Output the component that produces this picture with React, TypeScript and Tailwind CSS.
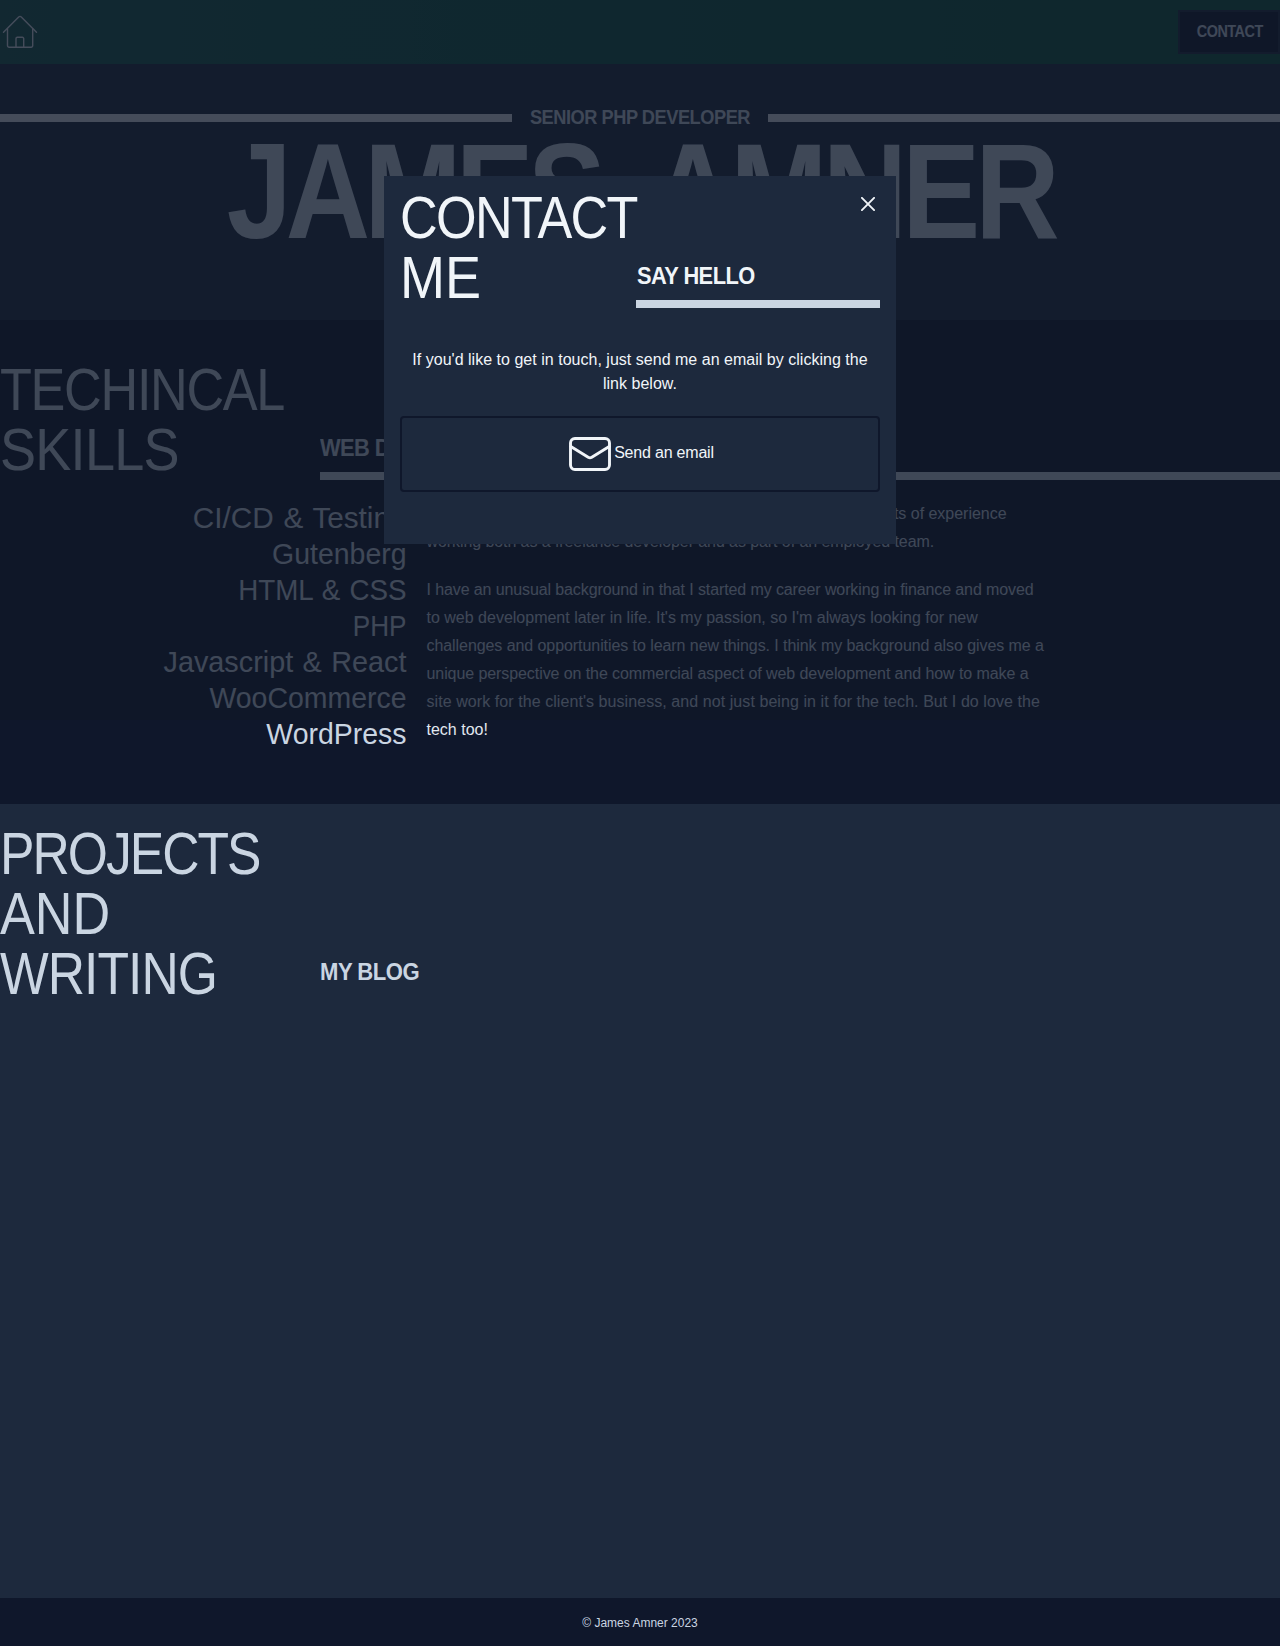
import React from "react";

const HEADING = "uppercase whitespace-nowrap";

const skills = [
  { name: "CI/CD & Testing", fit: "scale-x-[0.99] [word-spacing:1.5px]" },
  { name: "Gutenberg", fit: "scale-x-[0.948]" },
  { name: "HTML & CSS", fit: "scale-x-[0.925] [word-spacing:1.5px]" },
  { name: "PHP", fit: "scale-x-[0.87]" },
  { name: "Javascript & React", fit: "scale-x-[0.96] [word-spacing:1.5px]" },
  { name: "WooCommerce", fit: "scale-x-[0.948]" },
  { name: "WordPress", fit: "scale-x-[0.948]" },
];

function HomeIcon() {
  return (
    <svg className="h-10 w-10 text-slate-200" viewBox="0 0 40 40" fill="none" stroke="currentColor" strokeWidth="1.4" strokeLinecap="round" strokeLinejoin="round">
      <path d="M3.5 20.2 18.7 4.9a1.8 1.8 0 0 1 2.6 0l15.2 15.3" />
      <path d="M7.5 16.8V33.6a1.6 1.6 0 0 0 1.6 1.6h22a1.6 1.6 0 0 0 1.6-1.6V16.8" />
      <path d="M16 35.2v-8.6a1.3 1.3 0 0 1 1.3-1.3h5.1a1.3 1.3 0 0 1 1.3 1.3v8.6" />
    </svg>
  );
}

function MailIcon() {
  return (
    <svg className="h-[34px] w-[42px] shrink-0" viewBox="0 0 42 34" fill="none" stroke="currentColor" strokeWidth="2.9" strokeLinecap="round" strokeLinejoin="round">
      <rect x="1.5" y="1.5" width="39" height="31" rx="4.4" />
      <path d="M1.8 9.4 19.2 20.2q1.8 1 3.6 0L40.2 9.4" />
    </svg>
  );
}

function Header() {
  return (
    <header className="flex h-16 items-center justify-between bg-linear-to-r from-[#18584e] via-[#0c5644] via-45% to-[#0c543c]">
      <HomeIcon />
      <button className={`${HEADING} flex h-11 w-[102px] items-center justify-center border-2 border-slate-800 bg-slate-900 pl-px text-base font-bold text-slate-300`}>
        <span className="block scale-x-[0.9] tracking-[-0.5px]">Contact</span>
      </button>
    </header>
  );
}

function Hero() {
  return (
    <section className="h-64 bg-slate-800 pt-[39px]">
      <div className="flex items-center">
        <div className="mt-0.5 h-2 w-[512px] bg-slate-200" />
        <p className={`${HEADING} flex w-64 justify-center text-xl/7 font-bold text-slate-300`}>
          <span className="block scale-x-[0.91] tracking-[-0.5px]">Senior PHP Developer</span>
        </p>
        <div className="mt-0.5 h-2 w-[512px] bg-slate-200" />
      </div>
      <h1 className={`${HEADING} mt-[-3px] flex justify-center pl-0.5 text-[135px]/[128px] font-bold text-slate-300`}>
        <span className="block scale-x-[0.865] tracking-[-6.7px] [word-spacing:28px]">
          James <span className="tracking-[-5.6px]">Amner</span>
        </span>
      </h1>
    </section>
  );
}

function Skills() {
  return (
    <section className="h-[484px] bg-slate-900 pt-10">
      <div className="flex items-end">
        <h2 className={`${HEADING} w-80 text-[60px]/[60px] text-slate-300`}>
          <span className="block origin-left scale-x-[0.87] tracking-[-1.5px]">Techincal</span>
          <span className="block origin-left scale-x-[0.9] tracking-[-0.8px]">Skills</span>
        </h2>
        <div className="flex-1">
          <h3 className={`${HEADING} origin-left scale-x-[0.91] text-2xl/8 font-bold tracking-[-0.65px] text-slate-300`}>Web Development</h3>
          <div className="mt-2 h-2 bg-slate-300" />
        </div>
      </div>
      <div className="mt-5 flex">
        <ul className="w-[406.5px] text-right text-[30px]/9 whitespace-nowrap text-slate-300">
          {skills.map((s) => (
            <li key={s.name} className={`origin-right ${s.fit}`}>{s.name}</li>
          ))}
        </ul>
        <div className="ml-5 text-base/7 whitespace-nowrap text-slate-300">
          <p>
            <span className="block tracking-[-0.02px]">I've been a WordPress developer for the last several years, with lots of experience</span>
            <span className="block tracking-[-0.08px]">working both as a freelance developer and as part of an employed team.</span>
          </p>
          <p className="mt-5">
            <span className="block tracking-[-0.11px]">I have an unusual background in that I started my career working in finance and moved</span>
            <span className="block">to web development later in life. It's my passion, so I'm always looking for new</span>
            <span className="block tracking-[-0.07px]">challenges and opportunities to learn new things. I think my background also gives me a</span>
            <span className="block tracking-[-0.08px]">unique perspective on the commercial aspect of web development and how to make a</span>
            <span className="block tracking-[0.07px]">site work for the client's business, and not just being in it for the tech. But I do love the</span>
            <span className="block text-slate-200">tech too!</span>
          </p>
        </div>
      </div>
    </section>
  );
}

function Projects() {
  return (
    <section className="h-[794px] bg-slate-800 pt-5">
      <div className="flex items-end">
        <h2 className={`${HEADING} w-80 text-[60px]/[60px] text-slate-300`}>
          <span className="block origin-left scale-x-[0.86] tracking-[-2.3px]">Projects</span>
          <span className="block origin-left scale-x-[0.87]">and</span>
          <span className="block origin-left scale-x-[0.86] tracking-[-1.1px]">Writing</span>
        </h2>
        <h3 className={`${HEADING} mb-4 origin-left scale-x-[0.92] text-2xl/8 font-bold tracking-[-0.55px] text-slate-300`}>My Blog</h3>
      </div>
    </section>
  );
}

function ContactModal() {
  return (
    <div className="absolute inset-x-0 top-0 h-[720px] bg-gray-900/75 pt-44">
      <div role="dialog" className="relative mx-auto h-[368px] w-[512px] bg-slate-800 px-4 pt-3 text-slate-100">
        <button aria-label="Close" className="absolute top-5 right-5 p-px">
          <svg className="h-[14px] w-[14px]" viewBox="0 0 14 14" stroke="currentColor" strokeWidth="1.9" strokeLinecap="square">
            <path d="M.9.9 13.1 13.1M13.1.9.9 13.1" />
          </svg>
        </button>
        <div className="flex items-end">
          <h2 className={`${HEADING} w-[236px] text-[60px]/[60px]`}>
            <span className="block origin-left scale-x-[0.87] tracking-[-1.9px]">Contact</span>
            <span className="block origin-left scale-x-[0.9]">Me</span>
          </h2>
          <div className="flex-1">
            <h3 className={`${HEADING} ml-px origin-left scale-x-[0.91] text-2xl/8 font-bold tracking-[-0.6px]`}>Say Hello</h3>
            <div className="mt-2 h-2 bg-slate-300" />
          </div>
        </div>
        <p className="mt-10 text-center text-base/6 tracking-[0.02px] whitespace-nowrap">
          If you'd like to get in touch, just send me an email by clicking the
          <br />
          link below.
        </p>
        <a className="mt-5 flex h-[76px] items-center justify-center gap-[3px] rounded-sm border-2 border-slate-900 pl-[3px]">
          <MailIcon />
          <span className="pb-[3px] text-base/6 tracking-[-0.2px]">Send an email</span>
        </a>
      </div>
    </div>
  );
}

export default function App() {
  return (
    <div className="relative w-[1280px] overflow-hidden font-['Liberation_Sans',sans-serif]">
      <Header />
      <Hero />
      <Skills />
      <Projects />
      <footer className="h-12 bg-slate-900 pt-[17px] text-center text-xs/4 text-slate-300">© James Amner 2023</footer>
      <ContactModal />
    </div>
  );
}
